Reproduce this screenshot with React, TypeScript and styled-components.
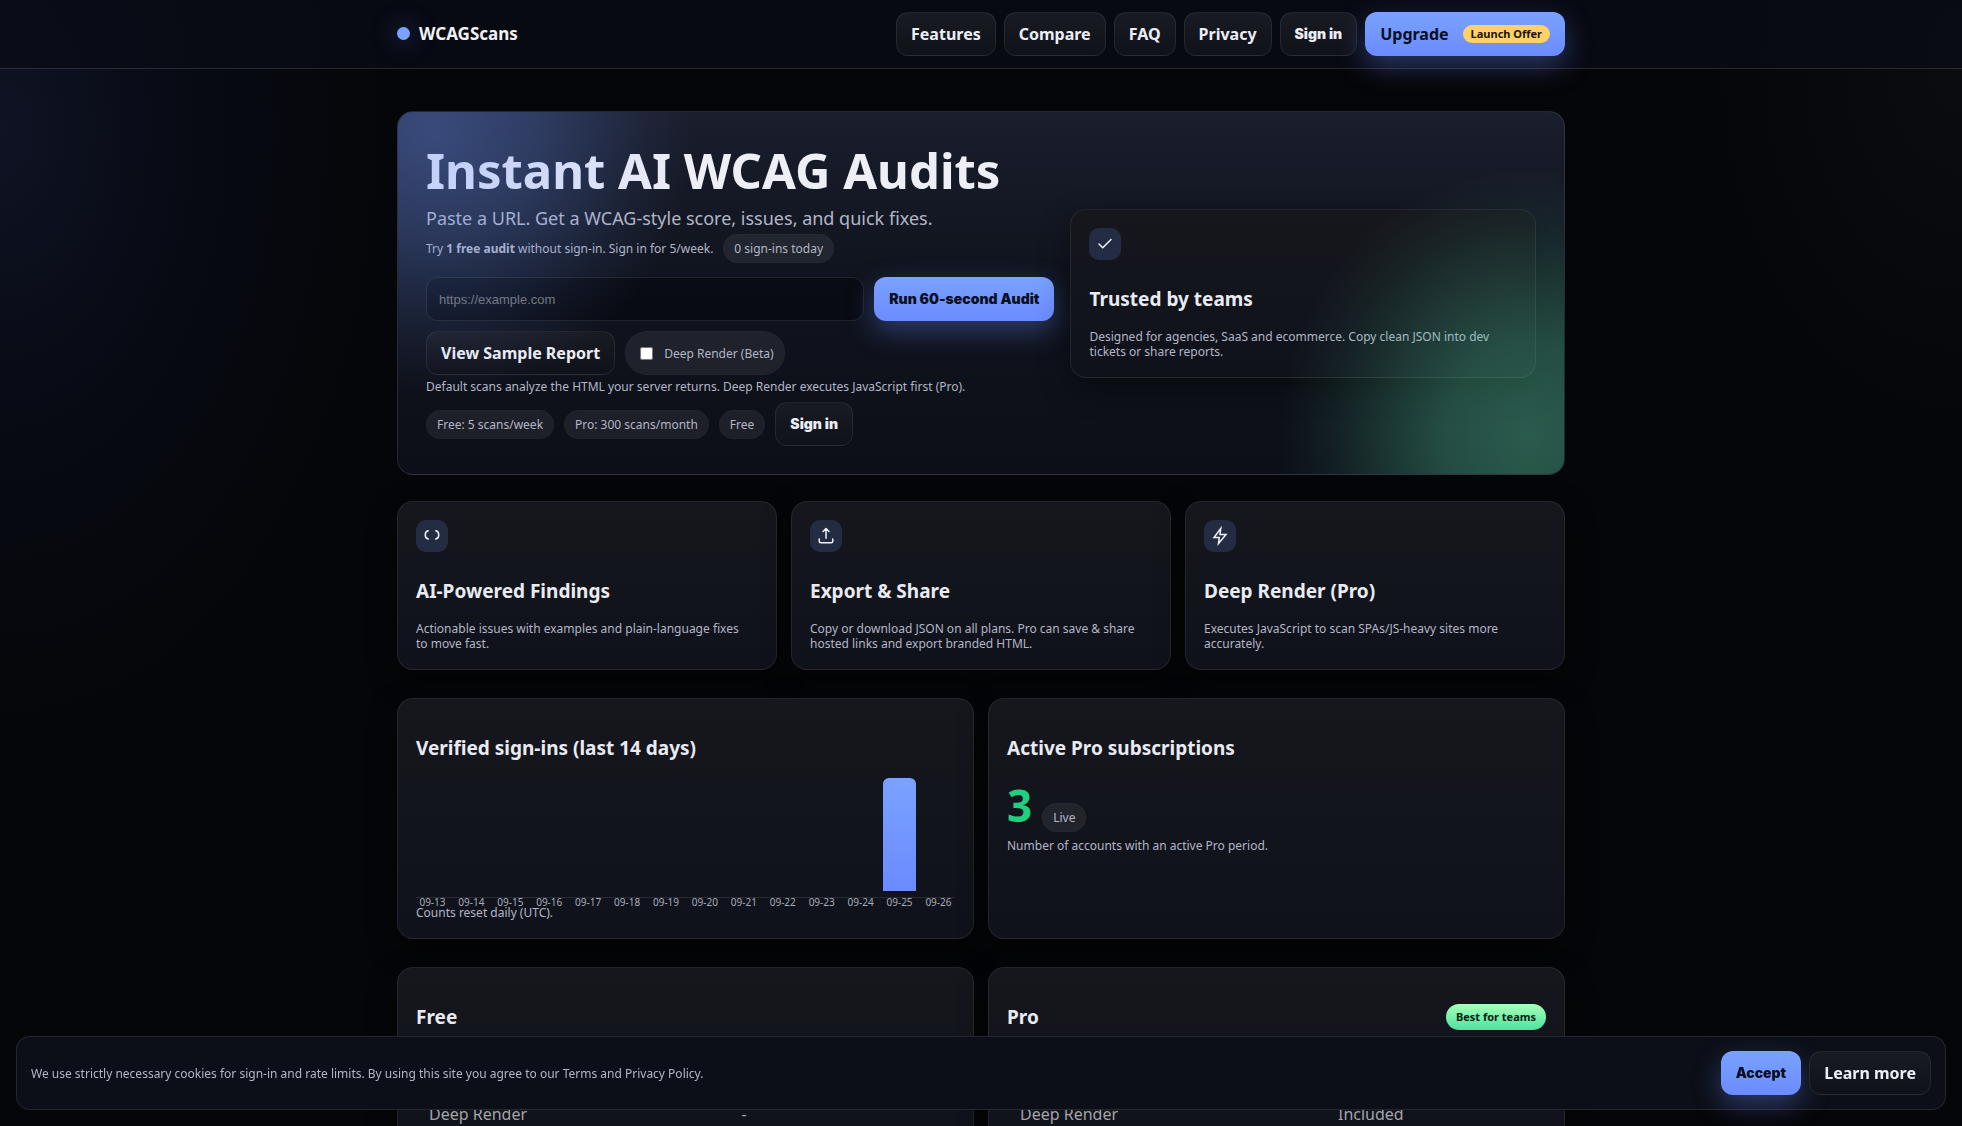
import React from 'react';
import styled, { createGlobalStyle, css } from 'styled-components';

const sans = '"Noto Sans", "Open Sans", sans-serif';
const heavy = 'Inter, "Liberation Sans", sans-serif';

const GlobalStyle = createGlobalStyle`
  *, *::before, *::after { box-sizing: border-box; }
  body {
    margin: 0;
    overflow: hidden;
    color: #e9eaf2;
    font: 16px/1.2 ${sans};
    background:
      radial-gradient(400px 620px at 0% 130px, rgba(20, 26, 50, 0.65), rgba(11, 15, 31, 0.45) 50%, transparent),
      radial-gradient(260px 380px at 100% 60px, rgba(20, 22, 26, 0.4), transparent),
      #050609;
    background-attachment: fixed;
    min-height: 100vh;
  }
`;

const Header = styled.header`
  border-bottom: 1px solid rgba(255, 255, 255, 0.13);
  background: rgba(9, 12, 22, 0.75);
`;

const Wrap = styled.div`
  max-width: 1200px;
  margin: 0 auto;
  padding: 0 16px;
`;

const Bar = styled(Wrap)`
  display: flex;
  align-items: center;
  justify-content: space-between;
  height: 68px;
`;

const Brand = styled.a`
  display: flex;
  align-items: center;
  gap: 9px;
  color: #f1f2f8;
  font-size: 17px;
  font-weight: 700;
  text-decoration: none;
`;

const Dot = styled.span`
  width: 13px;
  height: 13px;
  border-radius: 50%;
  background: #7aa2ff;
  box-shadow: 0 0 24px rgba(122, 140, 255, 0.5);
`;

const Nav = styled.nav`
  display: flex;
  align-items: center;
  gap: 8px;
`;

const buttonLook = css<{ $primary?: boolean }>`
  display: inline-flex;
  align-items: center;
  justify-content: center;
  gap: 14px;
  height: 44px;
  padding: 0 14px;
  border: 1px solid rgba(255, 255, 255, 0.08);
  border-radius: 12px;
  color: #eceef6;
  background: linear-gradient(180deg, #191b23, #101219);
  white-space: nowrap;
  text-decoration: none;
  cursor: pointer;
  ${(p) =>
    p.$primary &&
    css`
      border-color: transparent;
      color: #0a0f20;
      background: linear-gradient(180deg, #7aa2ff, #6b8bff) border-box;
      box-shadow: 0 10px 28px rgba(107, 139, 255, 0.35);
    `}
`;

const LinkButton = styled.a<{ $primary?: boolean }>`
  ${buttonLook}
  font: 700 16px/20px ${sans};
`;

const Button = styled.button<{ $primary?: boolean }>`
  ${buttonLook}
  font: 900 14px/20px ${heavy};
`;

const Offer = styled.span`
  padding: 0 8px;
  border-radius: 9px;
  background: #ffd166;
  color: #1a1405;
  font-size: 11px;
  line-height: 18px;
`;

const Main = styled(Wrap).attrs({ as: 'main' })`
  display: flex;
  flex-direction: column;
  padding-top: 42px;
`;

const Hero = styled.section`
  position: relative;
  display: grid;
  grid-template-columns: 1.35fr 1fr;
  align-items: center;
  gap: 16px;
  padding: 28px;
  margin-bottom: 26px;
  border: 1px solid rgba(255, 255, 255, 0.1);
  border-radius: 16px;
  overflow: hidden;
  background: linear-gradient(180deg, #1a1e2d, #10141e 45%, #0c0f17);
  &::after {
    content: '';
    position: absolute;
    inset: 0;
    pointer-events: none;
    background:
      radial-gradient(260px 260px at 3% 6%, rgba(110, 150, 255, 0.38), rgba(110, 150, 255, 0.26) 40%, rgba(110, 150, 255, 0.07) 80%, transparent),
      radial-gradient(250px 270px at 97% 90%, rgba(90, 215, 165, 0.38), rgba(90, 215, 165, 0.3) 35%, rgba(90, 215, 165, 0.07) 80%, transparent);
  }
`;

const Title = styled.h1`
  margin: 0 0 4px;
  color: #eeeef6;
  font-size: 49px;
  font-weight: 700;
  line-height: 60px;
`;

const Lead = styled.p`
  margin: 0;
  color: #b3b6c6;
  font-size: 18px;
  line-height: 28px;
`;

const Small = styled.p`
  margin: 0;
  color: #b3b6c6;
  font-size: 12px;
  line-height: 15px;
`;

const CardText = styled(Small)`
  padding-right: 8px;
`;

const Row = styled.div<{ $top?: number }>`
  display: flex;
  align-items: center;
  gap: 10px;
  margin-top: ${(p) => p.$top ?? 0}px;
`;

const Pill = styled.span`
  display: inline-flex;
  align-items: center;
  gap: 11px;
  padding: 6px 10px;
  border: 1px solid rgba(255, 255, 255, 0.02);
  border-radius: 22px;
  background: rgba(255, 255, 255, 0.07);
  color: #b3b6c6;
  font-size: 12px;
  line-height: 15px;
  white-space: nowrap;
`;

const CheckPill = styled(Pill).attrs({ as: 'label' })`
  height: 44px;
`;

const Check = styled.input`
  width: 13px;
  height: 13px;
  margin: 0 0 0 4px;
`;

const UrlInput = styled.input`
  flex: 1;
  min-width: 0;
  height: 44px;
  padding: 0 12px;
  border: 1px solid rgba(255, 255, 255, 0.1);
  border-radius: 12px;
  background: rgba(5, 7, 14, 0.6);
  color: #e9eaf2;
  font: 13px "Liberation Sans", Arial, sans-serif;
  &::placeholder { color: #757575; }
`;

const Grid = styled.section<{ $cols: number }>`
  display: grid;
  grid-template-columns: repeat(${(p) => p.$cols}, 1fr);
  gap: 14px;
  margin-bottom: 28px;
`;

const Card = styled.article`
  padding: 18px;
  border: 1px solid rgba(255, 255, 255, 0.08);
  border-radius: 16px;
  background: linear-gradient(180deg, #16171d, #0f121b);
  box-shadow: 0 10px 30px rgba(0, 0, 0, 0.4);
`;

const IconTile = styled.div`
  display: grid;
  place-items: center;
  width: 32px;
  height: 32px;
  margin-bottom: 28px;
  border-radius: 10px;
  background: #242c44;
  color: #f1f2f8;
`;

const CardTitle = styled.h2`
  margin: 20px 0 18px;
  font-size: 19px;
  font-weight: 700;
  line-height: 23px;
`;

const Chart = styled.div`
  display: flex;
  gap: 6px;
  height: 120px;
  border-bottom: 1px solid rgba(255, 255, 255, 0.1);
  margin-bottom: 7px;
`;

const Day = styled.div`
  flex: 1;
  display: flex;
  flex-direction: column;
  align-items: center;
  min-width: 0;
`;

const Track = styled.div`
  flex: none;
  display: flex;
  align-items: flex-end;
  width: 100%;
  height: 113px;
`;

const Fill = styled.div`
  width: 100%;
  border-radius: 6px 6px 0 0;
  background: linear-gradient(180deg, #7aa2ff, #6b8bff);
`;

const DayLabel = styled.span`
  margin-top: 4px;
  color: #a9acba;
  font-size: 10px;
  line-height: 14px;
  white-space: nowrap;
`;

const CountRow = styled.div`
  display: flex;
  align-items: flex-end;
  gap: 10px;
  margin-bottom: 6px;
`;

const Count = styled.strong`
  color: #20d080;
  font-size: 44px;
  line-height: 54px;
`;

const PlanHead = styled.div`
  display: flex;
  align-items: center;
  justify-content: space-between;
  margin-bottom: 48px;
`;

const Best = styled.span`
  padding: 0 10px;
  border-radius: 13px;
  background: linear-gradient(180deg, #a8ffb8, #4be3a0);
  color: #06210f;
  font-size: 11px;
  font-weight: 700;
  line-height: 26px;
`;

const Table = styled.table<{ $label: number }>`
  width: 100%;
  border-collapse: collapse;
  color: #a3a4a9;
  font-size: 16px;
  line-height: 19px;
  th, td { padding: 10px 13px; text-align: left; font-weight: 400; }
  th { width: ${(p) => p.$label}%; }
`;

const Cookie = styled.aside`
  position: fixed;
  left: 16px;
  right: 16px;
  bottom: 16px;
  display: flex;
  align-items: center;
  justify-content: space-between;
  padding: 14px;
  border: 1px solid rgba(255, 255, 255, 0.1);
  border-radius: 14px;
  background: #0c0f17;
`;

const CookieActions = styled.div`
  display: flex;
  gap: 8px;
`;

const Icon = ({ d, sharp }: { d: string; sharp?: boolean }) => (
  <svg
    width="18"
    height="18"
    viewBox="0 0 24 24"
    fill="none"
    stroke="currentColor"
    strokeWidth="2"
    strokeLinecap="round"
    strokeLinejoin={sharp ? 'miter' : 'round'}
    overflow="visible"
    aria-hidden="true"
  >
    <path d={d} />
  </svg>
);

const links = ['Features', 'Compare', 'FAQ', 'Privacy'];

const features = [
  {
    icon: 'M7 16c-2.600-.5-4-2.500-4-5.500S4.400 5.500 7 5M17 5c2.600.5 4 2.500 4 5.500S19.600 15.500 17 16',
    title: 'AI-Powered Findings',
    text: 'Actionable issues with examples and plain-language fixes to move fast.',
  },
  {
    icon: 'M12 15V3M8 6l4-4 4 4M3 16v3a2 2 0 0 0 2 2h14a2 2 0 0 0 2-2v-3',
    title: 'Export & Share',
    text: 'Copy or download JSON on all plans. Pro can save & share hosted links and export branded HTML.',
  },
  {
    icon: 'M13 2L4 14h7l-1 8 10-12h-8l1-8z',
    sharp: true,
    title: 'Deep Render (Pro)',
    text: 'Executes JavaScript to scan SPAs/JS-heavy sites more accurately.',
  },
];

const signIns = Array.from({ length: 14 }, (_, i) => ({ day: `09-${13 + i}`, share: i === 12 ? 100 : 0 }));

const plans = [
  { name: 'Free', label: 58, rows: [['Deep Render', '-']] },
  { name: 'Pro', label: 59, best: true, rows: [['Deep Render', 'Included']] },
];

export default function App() {
  return (
    <>
      <GlobalStyle />
      <Header>
        <Bar>
          <Brand href="#"><Dot />WCAGScans</Brand>
          <Nav>
            {links.map((l) => <LinkButton key={l} href={`#${l.toLowerCase()}`}>{l}</LinkButton>)}
            <Button type="button">Sign in</Button>
            <LinkButton $primary href="#upgrade">Upgrade<Offer>Launch Offer</Offer></LinkButton>
          </Nav>
        </Bar>
      </Header>
      <Main>
        <Hero>
          <div>
            <Title>Instant AI WCAG Audits</Title>
            <Lead>Paste a URL. Get a WCAG-style score, issues, and quick fixes.</Lead>
            <Row $top={2}>
              <Small>Try <b>1 free audit</b> without sign-in. Sign in for 5/week.</Small>
              <Pill>0 sign-ins today</Pill>
            </Row>
            <Row $top={14}>
              <UrlInput type="url" aria-label="Website URL" placeholder="https://example.com" />
              <Button $primary type="button">Run 60-second Audit</Button>
            </Row>
            <Row $top={10}>
              <LinkButton href="#sample">View Sample Report</LinkButton>
              <CheckPill><Check type="checkbox" />Deep Render (Beta)</CheckPill>
            </Row>
            <Row $top={4}>
              <Small>Default scans analyze the HTML your server returns. Deep Render executes JavaScript first (Pro).</Small>
            </Row>
            <Row $top={8}>
              <Pill>Free: 5 scans/week</Pill>
              <Pill>Pro: 300 scans/month</Pill>
              <Pill>Free</Pill>
              <Button type="button">Sign in</Button>
            </Row>
          </div>
          <Card>
            <IconTile><Icon d="M4 12l5 5L20 6" /></IconTile>
            <CardTitle>Trusted by teams</CardTitle>
            <CardText>Designed for agencies, SaaS and ecommerce. Copy clean JSON into dev tickets or share reports.</CardText>
          </Card>
        </Hero>
        <Grid $cols={3}>
          {features.map((f) => (
            <Card key={f.title}>
              <IconTile><Icon d={f.icon} sharp={f.sharp} /></IconTile>
              <CardTitle>{f.title}</CardTitle>
              <CardText>{f.text}</CardText>
            </Card>
          ))}
        </Grid>
        <Grid $cols={2}>
          <Card>
            <CardTitle>Verified sign-ins (last 14 days)</CardTitle>
            <Chart>
              {signIns.map((s) => (
                <Day key={s.day}>
                  <Track><Fill style={{ height: `${s.share}%` }} /></Track>
                  <DayLabel>{s.day}</DayLabel>
                </Day>
              ))}
            </Chart>
            <Small>Counts reset daily (UTC).</Small>
          </Card>
          <Card>
            <CardTitle>Active Pro subscriptions</CardTitle>
            <CountRow><Count>3</Count><Pill>Live</Pill></CountRow>
            <Small>Number of accounts with an active Pro period.</Small>
          </Card>
        </Grid>
        <Grid $cols={2}>
          {plans.map((p) => (
            <Card key={p.name}>
              <PlanHead>
                <CardTitle>{p.name}</CardTitle>
                {p.best && <Best>Best for teams</Best>}
              </PlanHead>
              <Table $label={p.label}>
                <tbody>
                  {p.rows.map(([k, v]) => <tr key={k}><th scope="row">{k}</th><td>{v}</td></tr>)}
                </tbody>
              </Table>
            </Card>
          ))}
        </Grid>
      </Main>
      <Cookie aria-label="Cookie notice">
        <Small>We use strictly necessary cookies for sign-in and rate limits. By using this site you agree to our Terms and Privacy Policy.</Small>
        <CookieActions>
          <Button $primary type="button">Accept</Button>
          <LinkButton href="#privacy">Learn more</LinkButton>
        </CookieActions>
      </Cookie>
    </>
  );
}
